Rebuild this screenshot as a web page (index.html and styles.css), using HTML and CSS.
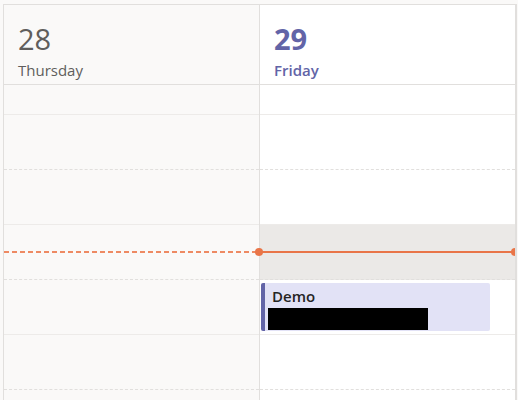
FILE: index.html
```html
<!DOCTYPE html>
<html>
<head>
<meta charset="utf-8">
<link rel="stylesheet" href="styles.css">
</head>
<body>
<div class="calendar">
  <div class="day past">
    <div class="day-head">
      <div class="num">28</div>
      <div class="name">Thursday</div>
    </div>
    <div class="slots">
      <div class="slot first"></div>
      <div class="slot dashed"></div>
      <div class="slot"></div>
      <div class="slot dashed"></div>
      <div class="slot"></div>
      <div class="slot dashed"></div>
      <div class="slot"></div>
      <div class="now-dash"></div>
    </div>
  </div>
  <div class="day today">
    <div class="day-head">
      <div class="num">29</div>
      <div class="name">Friday</div>
    </div>
    <div class="slots">
      <div class="slot first"></div>
      <div class="slot dashed"></div>
      <div class="slot"></div>
      <div class="slot dashed current"></div>
      <div class="slot"></div>
      <div class="slot dashed"></div>
      <div class="slot"></div>
      <div class="now-line"><span class="dot left"></span><span class="dot right"></span></div>
      <div class="event">
        <div class="event-title">Demo</div>
        <div class="event-redact"></div>
      </div>
    </div>
  </div>
</div>
</body>
</html>
```

FILE: styles.css
```css
html, body {
  margin: 0;
  padding: 0;
  background: #faf9f8;
  font-family: "Open Sans", "Noto Sans", sans-serif;
  overflow: hidden;
  height: 400px;
}
.calendar {
  margin: 4px 0 0 3px;
  display: grid;
  grid-template-columns: 256px 255px;
  border-top: 1px solid #e1dfdd;
  border-left: 1px solid #e1dfdd;
  width: 511px;
  border-right: 2px solid #e1dfdd;
  height: 396px;
  overflow: hidden;
}
.day {
  display: flex;
  flex-direction: column;
}
.day.past {
  background: #faf9f8;
  border-right: 1px solid #e1dfdd;
}
.day.today {
  background: #ffffff;
}
.day-head {
  height: 80px;
  box-sizing: border-box;
  border-bottom: 1px solid #e1dfdd;
  padding: 15px 0 0 14px;
  color: #605e5c;
  flex: none;
}
.today .day-head {
  color: #6264a7;
  padding-left: 14px;
}
.num {
  font-size: 29px;
  line-height: 38px;
  font-weight: 400;
}
.today .num {
  font-weight: 700;
}
.name {
  font-size: 15px;
  line-height: 20px;
  margin-top: 2px;
}
.today .name {
  font-weight: 600;
}
.slots {
  position: relative;
  display: flex;
  flex-direction: column;
}
.slot {
  height: 54px;
  border-bottom: 1px solid #edebe9;
  flex: none;
}
.slot.first {
  height: 29px;
}
.slot.dashed {
  border-bottom: 1px dashed #e1dfdd;
}
.slot.current {
  background: #ebe9e7;
}
.now-dash {
  position: absolute;
  left: 0;
  right: 0;
  top: 166px;
  height: 2px;
  background: repeating-linear-gradient(to right, #ee8a63 0 5px, transparent 5px 8px);
}
.now-line {
  position: absolute;
  left: 0;
  right: 0;
  top: 166px;
  height: 2px;
  background: #e97548;
}
.dot {
  position: absolute;
  width: 8px;
  height: 8px;
  border-radius: 50%;
  background: #e97548;
  top: -3px;
}
.dot.left { left: -5px; }
.dot.right { right: -4px; }
.event {
  position: absolute;
  left: 1px;
  top: 198px;
  width: 229px;
  height: 48px;
  background: #e2e2f6;
  border-left: 4px solid #6264a7;
  border-radius: 2px;
  box-sizing: border-box;
  padding: 3px 0 0 7px;
}
.event-title {
  font-size: 15px;
  line-height: 20px;
  font-weight: 600;
  color: #252423;
}
.event-redact {
  margin: 2px 0 0 -4px;
  width: 160px;
  height: 22px;
  background: #000;
}
```
